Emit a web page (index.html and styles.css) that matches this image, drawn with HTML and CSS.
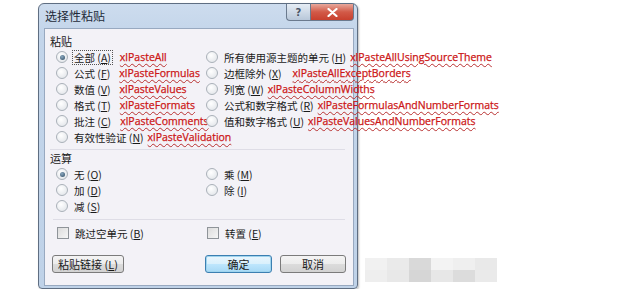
FILE: index.html
```html
<!DOCTYPE html>
<html lang="zh-CN">

<head>
  <meta charset="UTF-8" />
  <meta name="viewport" content="width=device-width, initial-scale=1.0" />
  <title>选择性粘贴</title>
  <link rel="stylesheet" href="styles.css">
</head>

<body>
  <div class="page">
    <div class="dialog">
      <div class="titlebar">
        <span class="title">选择性粘贴</span>
        <div class="caption-btns">
          <span class="btn-help">?</span>
          <span class="btn-close">
            <svg width="11" height="9" viewBox="0 0 11 9">
              <path d="M1.5 1 L9.5 8 M9.5 1 L1.5 8" stroke="#fff" stroke-width="2.2" stroke-linecap="round" />
            </svg>
          </span>
        </div>
      </div>
      <div class="client">
        <div class="group-label">粘贴</div>
        <div class="opts">
          <div class="opt"><span class="radio on"></span><span class="txt focus">全部 (<u>A</u>)</span><span class="const far">xlPasteAll</span></div>
          <div class="opt"><span class="radio"></span><span class="txt">所有使用源主题的单元 (<u>H</u>)</span><span class="const">xlPasteAllUsingSourceTheme</span></div>
          <div class="opt"><span class="radio"></span><span class="txt">公式 (<u>F</u>)</span><span class="const far">xlPasteFormulas</span></div>
          <div class="opt"><span class="radio"></span><span class="txt">边框除外 (<u>X</u>)</span><span class="const wide">xlPasteAllExceptBorders</span></div>
          <div class="opt"><span class="radio"></span><span class="txt">数值 (<u>V</u>)</span><span class="const far">xlPasteValues</span></div>
          <div class="opt"><span class="radio"></span><span class="txt">列宽 (<u>W</u>)</span><span class="const">xlPasteColumnWidths</span></div>
          <div class="opt"><span class="radio"></span><span class="txt">格式 (<u>T</u>)</span><span class="const far">xlPasteFormats</span></div>
          <div class="opt"><span class="radio"></span><span class="txt">公式和数字格式 (<u>R</u>)</span><span class="const">xlPasteFormulasAndNumberFormats</span></div>
          <div class="opt"><span class="radio"></span><span class="txt">批注 (<u>C</u>)</span><span class="const far">xlPasteComments</span></div>
          <div class="opt"><span class="radio"></span><span class="txt">值和数字格式 (<u>U</u>)</span><span class="const">xlPasteValuesAndNumberFormats</span></div>
          <div class="opt"><span class="radio"></span><span class="txt">有效性验证 (<u>N</u>)</span><span class="const">xlPasteValidation</span></div>
        </div>

        <div class="sep"></div>
        <div class="group-label">运算</div>
        <div class="opts">
          <div class="opt"><span class="radio on"></span><span class="txt">无 (<u>O</u>)</span></div>
          <div class="opt"><span class="radio"></span><span class="txt">乘 (<u>M</u>)</span></div>
          <div class="opt"><span class="radio"></span><span class="txt">加 (<u>D</u>)</span></div>
          <div class="opt"><span class="radio"></span><span class="txt">除 (<u>I</u>)</span></div>
          <div class="opt"><span class="radio"></span><span class="txt">减 (<u>S</u>)</span></div>
        </div>

        <div class="sep sep-low"></div>
        <div class="opts checks">
          <div class="opt"><span class="check"></span><span class="txt">跳过空单元 (<u>B</u>)</span></div>
          <div class="opt"><span class="check"></span><span class="txt">转置 (<u>E</u>)</span></div>
        </div>

        <div class="buttons">
          <button class="btn btn-link">粘贴链接 (<u>L</u>)</button>
          <div class="buttons-right">
            <button class="btn btn-default">确定</button>
            <button class="btn">取消</button>
          </div>
        </div>
      </div>
    </div>

    <div class="mosaic">
      <span style="background:#f1f1f1"></span><span style="background:#eaeaea"></span><span style="background:#d9d9d9"></span><span style="background:#f3f3f3"></span><span style="background:#efefef"></span><span style="background:#e9e9e9"></span>
      <span style="background:#eeeeee"></span><span style="background:#e8e8e8"></span><span style="background:#d6d6d6"></span><span style="background:#e7e7e7"></span><span style="background:#dcdcdc"></span><span style="background:#eaeaea"></span>
    </div>
  </div>
</body>

</html>
```

FILE: styles.css
```css
body {
  margin: 0;
  padding: 0;
  background-color: #ffffff;
  font-family: 'Noto Sans CJK SC', sans-serif;
  font-size: 10.5px;
  color: #1a1a1a;
}

.page {
  display: flex;
  align-items: flex-end;
  padding: 3px 0 0 38px;
}

.dialog {
  width: 310px;
  padding: 0 3px 2px 5px;
  border: 1px solid #5f6e82;
  border-radius: 6px 6px 4px 4px;
  background: linear-gradient(to bottom, #cddcee 0px, #c3d5ea 30px, #bfd2e8 100%);
  box-shadow: 1px 1px 2px rgba(0, 0, 0, 0.25);
}

.titlebar {
  height: 24px;
  display: flex;
  justify-content: space-between;
  align-items: flex-start;
}

.title {
  padding: 4px 0 0 1px;
  font-size: 12px;
  line-height: 16px;
  color: #1e2a38;
}

.caption-btns {
  display: flex;
}

.btn-help,
.btn-close {
  height: 16px;
  border: 1px solid #6b7a8e;
  border-top: none;
  display: flex;
  align-items: center;
  justify-content: center;
}

.btn-help {
  width: 23px;
  border-radius: 0 0 0 4px;
  border-right: none;
  background: linear-gradient(to bottom, #e6edf5, #b8c7d9);
  color: #4a5566;
  font-family: 'DejaVu Sans', sans-serif;
  font-size: 10px;
  font-weight: bold;
}

.btn-close {
  width: 42px;
  border-radius: 0 0 4px 0;
  background: linear-gradient(to bottom, #e8a89c, #d25a48 50%, #c8402e);
}

.client {
  height: 252px;
  border: 1px solid #98a9c0;
  background-color: #f3f2f7;
  padding: 4px 6px 0 5px;
}

.group-label {
  font-size: 11px;
  line-height: 16px;
}

.opts {
  display: grid;
  grid-template-columns: 150px auto;
  grid-auto-rows: 16px;
  padding-left: 6px;
}

.opt {
  display: flex;
  align-items: center;
  white-space: nowrap;
}

.txt {
  margin-left: 5px;
  line-height: 13px;
  padding: 0 1px;
}

.txt u {
  text-underline-offset: 1px;
}

.focus {
  outline: 1px dotted #555;
  outline-offset: 0;
}

.radio {
  width: 10px;
  height: 10px;
  flex: none;
  border: 1px solid #aab1b9;
  border-radius: 50%;
  background: radial-gradient(circle at 40% 35%, #ffffff, #dde1e6);
  position: relative;
}

.radio.on::after {
  content: '';
  position: absolute;
  left: 2.5px;
  top: 2.5px;
  width: 5px;
  height: 5px;
  border-radius: 50%;
  background: radial-gradient(circle at 40% 35%, #8aa8c0, #2f4a60);
}

.check {
  width: 10px;
  height: 10px;
  flex: none;
  margin-left: 1px;
  border: 1px solid #8f9499;
  background: linear-gradient(135deg, #dcdcdc, #f6f6f6);
}

.const {
  margin-left: 3px;
  font-family: 'Open Sans', sans-serif;
  font-size: 10.5px;
  line-height: 13px;
  color: #cc1515;
  -webkit-text-stroke: 0.25px #cc1515;
  text-decoration: underline wavy #b83030;
  text-decoration-thickness: 1px;
  text-underline-offset: 2px;
}

.const.far {
  margin-left: 8px;
}

.const.wide {
  margin-left: 10px;
}

.sep {
  height: 1px;
  margin: 4px 2px 0 0;
  background-color: #dedde6;
}

.sep-low {
  margin: 5px 2px 5px 3px;
}

.buttons {
  display: flex;
  justify-content: space-between;
  margin-top: 14px;
  padding: 0 1px 0 2px;
}

.buttons-right {
  display: flex;
  gap: 8px;
}

.btn {
  height: 18px;
  padding: 0;
  border: 1px solid #7b7b7b;
  border-radius: 3px;
  background: linear-gradient(to bottom, #f4f4f4 0%, #ececec 50%, #dcdcdc 51%, #d2d2d2 100%);
  font-family: 'Noto Sans CJK SC', sans-serif;
  font-size: 11px;
  line-height: 14px;
  color: #1a1a1a;
  width: 66px;
}

.btn-link {
  width: 72px;
}

.btn-default {
  width: 67px;
  border-color: #3c7fb1;
  box-shadow: inset 0 0 0 1px #9fd4ee;
  background: linear-gradient(to bottom, #eaf6fd 0%, #d9f0fc 50%, #bee6fd 51%, #a7d9f5 100%);
}

.mosaic {
  display: grid;
  grid-template-columns: repeat(6, 22px);
  grid-auto-rows: 12px;
  margin: 0 0 7px 7px;
}
```
